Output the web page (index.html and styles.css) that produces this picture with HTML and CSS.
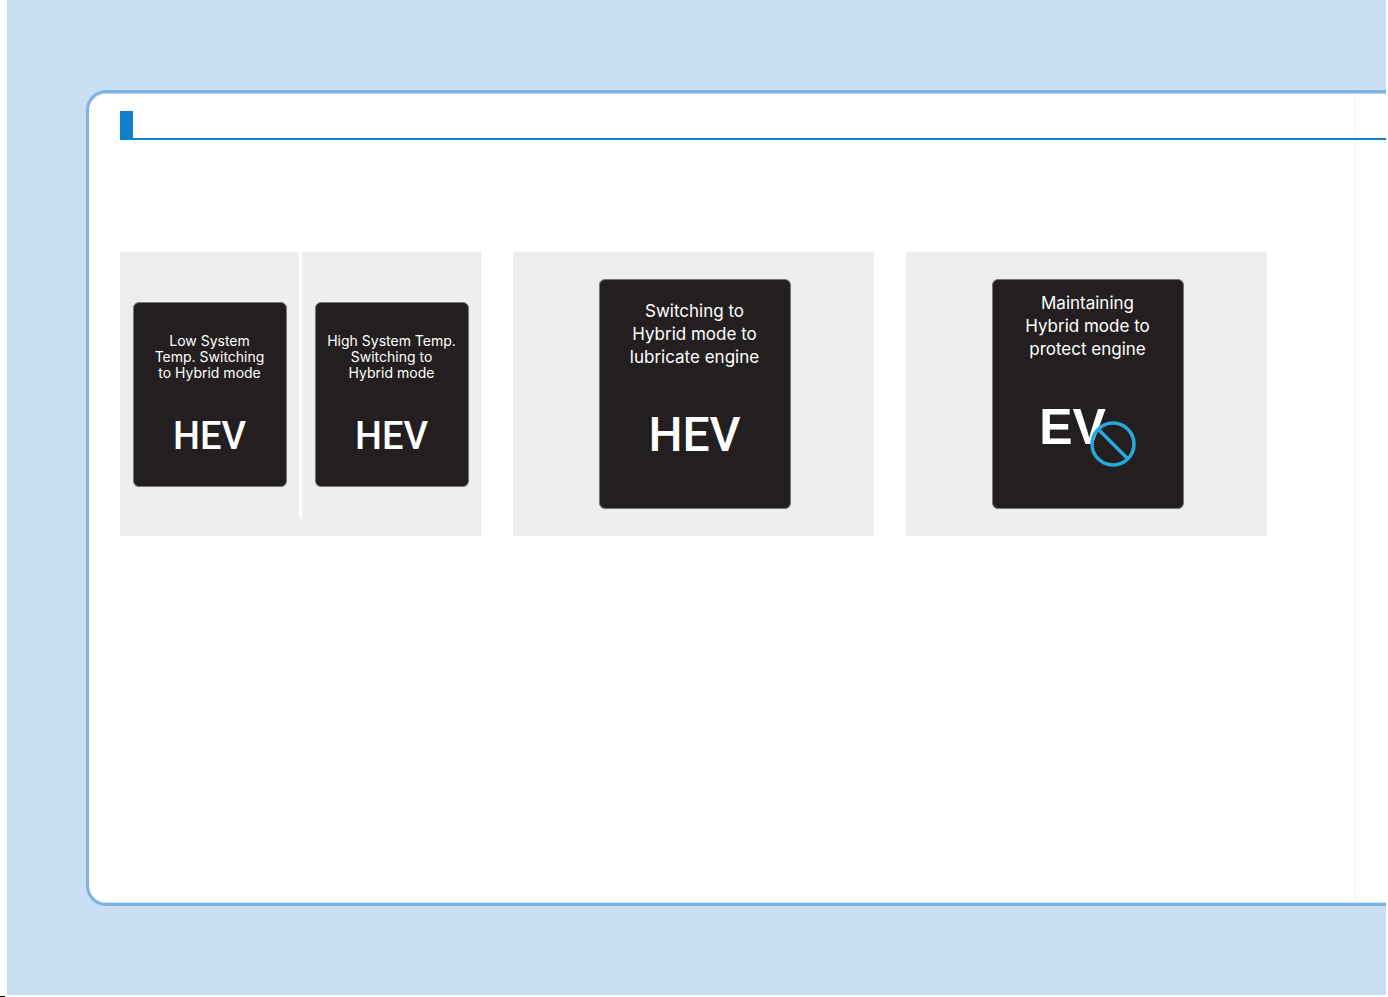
FILE: index.html
```html
<!DOCTYPE html>
<html lang="en">
<head>
    <meta charset="UTF-8">
    <meta name="viewport" content="width=device-width, initial-scale=1.0">
    <title>Hybrid Mode Messages</title>
    <link rel="stylesheet" href="styles.css">
</head>
<body>
    <div class="page">
        <main class="panel">
            <div class="fold"></div>
            <div class="section-bar"></div>

            <div class="figures">
                <!-- System temperature messages -->
                <figure class="figure split">
                    <div class="half">
                        <div class="screen small">
                            <p class="message">Low System<br>Temp. Switching<br>to Hybrid mode</p>
                            <p class="mode">HEV</p>
                        </div>
                    </div>
                    <div class="half">
                        <div class="screen small">
                            <p class="message">High System Temp.<br>Switching to<br>Hybrid mode</p>
                            <p class="mode">HEV</p>
                        </div>
                    </div>
                </figure>

                <!-- Engine lubrication message -->
                <figure class="figure">
                    <div class="screen">
                        <p class="message">Switching to<br>Hybrid mode to<br>lubricate engine</p>
                        <p class="mode">HEV</p>
                    </div>
                </figure>

                <!-- Engine protection message -->
                <figure class="figure">
                    <div class="screen protect">
                        <p class="message">Maintaining<br>Hybrid mode to<br>protect engine</p>
                        <p class="mode ev">EV
                            <svg class="ban" viewBox="0 0 46 46" aria-hidden="true">
                                <circle cx="23" cy="23" r="21"/>
                                <path d="M8 8L38 38"/>
                            </svg>
                        </p>
                    </div>
                </figure>
            </div>
        </main>
    </div>
    <div class="mark"></div>
</body>
</html>
```

FILE: styles.css
```css
* {
    box-sizing: border-box;
}
body {
    margin: 0;
    min-height: 100vh;
    display: flex;
    flex-direction: column;
    background-color: #fff;
    font-family: Inter, "Liberation Sans", sans-serif;
}
.page {
    flex: 1;
    display: flex;
    margin: 0 2px 2px 7px;
    padding: 90px 0 89px 79px;
    background-color: #cadff4;
}
.panel {
    position: relative;
    flex: 1;
    min-width: 0;
    padding: 18px 0 0 31px;
    background-color: #fff;
    border: 3px solid #7fb3e3;
    border-right: none;
    border-radius: 20px 0 0 20px;
    box-shadow: inset 0 1px #b8d5f0, inset 0 -1px #cadff4;
}
.section-bar {
    position: relative;
    height: 29px;
    border-left: 13px solid #107fcc;
    background: linear-gradient(#107fcc, #107fcc) bottom / 100% 2px no-repeat;
}
.figures {
    display: grid;
    grid-template-columns: repeat(3, 1fr);
    gap: 32px;
    margin: 112px 119px 0 0;
}
.figure {
    display: flex;
    justify-content: center;
    margin: 0;
    padding: 27px 0 27px 2px;
    background-color: #eee;
}
.split {
    padding: 0 0 19px;
}
.half {
    flex: 1;
    display: flex;
    justify-content: center;
    padding: 50px 0 30px;
}
.half + .half {
    border-left: 3px solid #fff;
}
.screen {
    width: 192px;
    height: 230px;
    padding-top: 20px;
    background-color: #231f20;
    border: 1px solid #777;
    border-radius: 6px;
    color: #fff;
    text-align: center;
}
.screen p {
    margin: 0;
}
.message {
    font-size: 17px;
    line-height: 23px;
    white-space: nowrap;
}
.mode {
    font-family: Roboto, sans-serif;
    font-size: 48px;
    font-weight: 500;
    line-height: 132px;
}
.small {
    width: 154px;
    height: 185px;
    padding-top: 30px;
}
.small .message {
    font-size: 14px;
    line-height: 16px;
}
.small .mode {
    font-size: 38px;
    line-height: 110px;
}
.protect {
    padding-top: 12px;
}
.ev {
    position: relative;
    padding-right: 30px;
    font-family: "Liberation Sans", sans-serif;
    font-size: 50px;
    font-weight: bold;
}
.ban {
    position: absolute;
    left: 97px;
    top: 60px;
    width: 46px;
    height: 46px;
    fill: none;
    stroke: #27a8dc;
    stroke-width: 3.5;
}
/* Page fold near the right edge */
.fold {
    position: absolute;
    top: 0;
    bottom: 0;
    right: 30px;
    width: 1px;
    background-color: #f1f2f4;
}
.mark {
    position: absolute;
    left: 0;
    bottom: 0;
    width: 5px;
    height: 1px;
    background-color: #000;
}
```
